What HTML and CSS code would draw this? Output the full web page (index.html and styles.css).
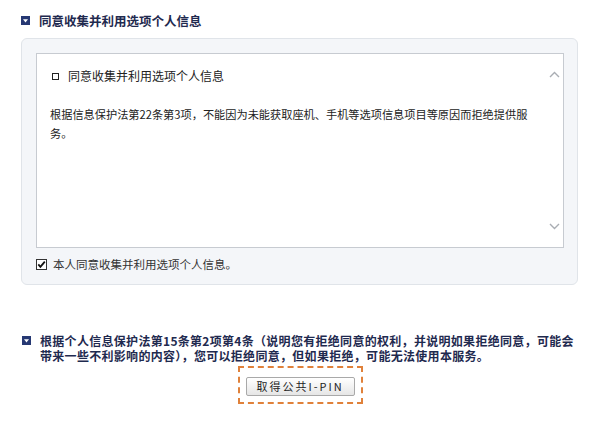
FILE: index.html
```html
<!DOCTYPE html>
<html lang="zh">
<head>
<meta charset="utf-8">
<link rel="stylesheet" href="styles.css">
</head>
<body>
<div class="page">
  <h2 class="sec-title sec-title-1">
    <span class="tri-icon"><svg width="9" height="9" viewBox="0 0 9 9"><rect width="9" height="9" fill="#263873"/><path d="M2 3.2 L7 3.2 L4.5 6.4 Z" fill="#fff"/></svg></span>
    <span>同意收集并利用选项个人信息</span>
  </h2>
  <div class="panel">
    <div class="textbox">
      <div class="textbox-content">
        <p class="opt-line"><span class="small-box"></span>同意收集并利用选项个人信息</p>
        <p class="para">根据信息保护法第22条第3项，不能因为未能获取座机、手机等选项信息项目等原因而拒绝提供服务。</p>
      </div>
      <div class="scrollbar">
        <svg width="11" height="7" viewBox="0 0 11 7"><path d="M1 6 L5.5 1.5 L10 6" fill="none" stroke="#a9adb3" stroke-width="1.4"/></svg>
        <svg width="11" height="7" viewBox="0 0 11 7"><path d="M1 1 L5.5 5.5 L10 1" fill="none" stroke="#a9adb3" stroke-width="1.4"/></svg>
      </div>
    </div>
    <label class="agree">
      <span class="check"><svg width="11" height="11" viewBox="0 0 11 11"><rect x="0.5" y="0.5" width="10" height="10" fill="#fff" stroke="#333"/><path d="M2.3 5.4 L4.4 7.8 L8.8 2.6" fill="none" stroke="#111" stroke-width="1.8"/></svg></span>
      <span>本人同意收集并利用选项个人信息。</span>
    </label>
  </div>
  <h2 class="sec-title sec-title-2">
    <span class="tri-icon"><svg width="9" height="9" viewBox="0 0 9 9"><rect width="9" height="9" fill="#263873"/><path d="M2 3.2 L7 3.2 L4.5 6.4 Z" fill="#fff"/></svg></span>
    <span>根据个人信息保护法第15条第2项第4条（说明您有拒绝同意的权利，并说明如果拒绝同意，可能会带来一些不利影响的内容），您可以拒绝同意，但如果拒绝，可能无法使用本服务。</span>
  </h2>
  <div class="btn-wrap">
    <div class="btn-focus">
      <button class="btn" type="button">取得公共I-PIN</button>
    </div>
  </div>
</div>
</body>
</html>
```

FILE: styles.css
```css
* { box-sizing: border-box; }
html, body { margin: 0; padding: 0; background: #fff; }
body {
  font-family: "Noto Sans CJK SC", "Noto Sans", sans-serif;
  color: #222;
  width: 600px;
  height: 422px;
  overflow: hidden;
}
.page { padding: 13px 0 0 0; }
.sec-title {
  margin: 0;
  display: flex;
  align-items: flex-start;
  font-weight: bold;
  color: #1f2a4f;
}
.sec-title-1 {
  padding-left: 21px;
  font-size: 12.5px;
  line-height: 15px;
  letter-spacing: 0;
}
.sec-title-2 {
  margin-top: 48px;
  padding-left: 22px;
  padding-right: 18px;
  font-size: 12px;
  line-height: 15px;
  letter-spacing: 0.3px;
}
.tri-icon {
  flex: none;
  display: flex;
  width: 9px;
  height: 9px;
  margin-top: 3px;
  margin-right: 9px;
}
.panel {
  margin: 10px 22px 0 21px;
  height: 247px;
  background: #f4f6f9;
  border: 1px solid #e0e4e9;
  border-radius: 6px;
  padding: 14px 13px 0 14px;
}
.textbox {
  display: flex;
  height: 195px;
  background: #fff;
  border: 1px solid #c7cbd1;
}
.textbox-content {
  flex: 1;
  padding: 14px 14px 0 13px;
}
.opt-line {
  margin: 0;
  display: flex;
  align-items: center;
  font-size: 12px;
  line-height: 16px;
  color: #222;
}
.small-box {
  width: 7px;
  height: 7px;
  border: 1px solid #222;
  margin: 0 9px 0 2px;
}
.para {
  margin: 21px 0 0 0;
  font-size: 11.2px;
  line-height: 19px;
  color: #222;
}
.scrollbar {
  flex: none;
  width: 17px;
  background: #fff;
  display: flex;
  flex-direction: column;
  justify-content: space-between;
  align-items: center;
  padding: 17px 0 17px 0;
}
.agree {
  display: flex;
  align-items: center;
  margin-top: 9px;
  font-size: 11.5px;
  line-height: 14px;
  color: #333;
}
.check {
  display: flex;
  margin-right: 6px;
}
.btn-wrap {
  display: flex;
  justify-content: center;
  margin-top: 3px;
}
.btn-focus {
  width: 125px;
  height: 38px;
  border: 2px dashed #e0813a;
  padding: 9px 0 0 6px;
}
.btn {
  width: 109px;
  height: 19px;
  padding: 0;
  border: 1px solid #a9a9a9;
  border-radius: 2px;
  background: linear-gradient(#ffffff, #e6e6e6);
  font-family: "Noto Sans CJK SC", sans-serif;
  font-size: 11px;
  line-height: 17px;
  letter-spacing: 2px;
  color: #222;
  display: block;
}
```
